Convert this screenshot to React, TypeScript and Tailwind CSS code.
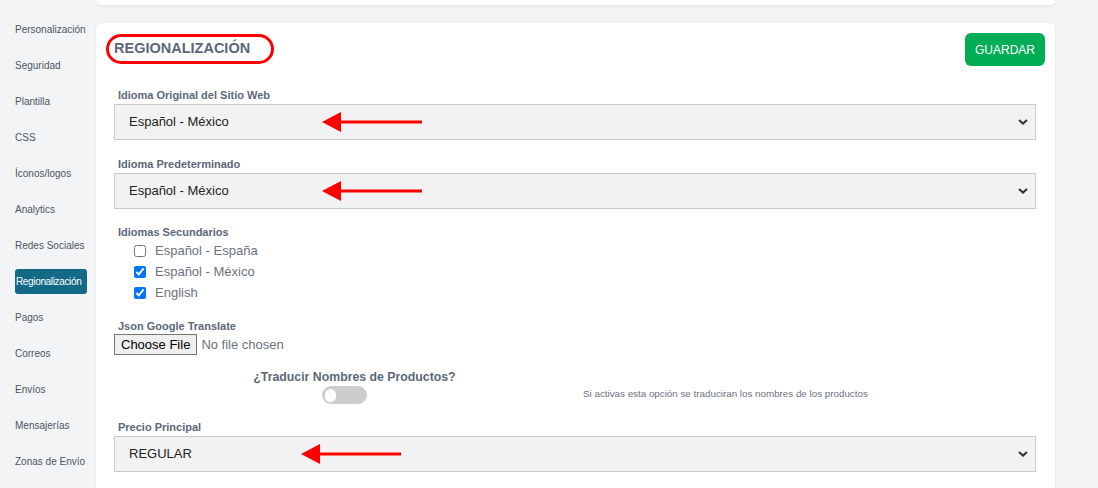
import { useState } from "react";

const MENU = [
  "Personalización",
  "Seguridad",
  "Plantilla",
  "CSS",
  "Íconos/logos",
  "Analytics",
  "Redes Sociales",
  "Regionalización",
  "Pagos",
  "Correos",
  "Envíos",
  "Mensajerías",
  "Zonas de Envío",
];

const IDIOMAS = [
  { label: "Español - España", checked: false },
  { label: "Español - México", checked: true },
  { label: "English", checked: true },
];

function Chevron() {
  return (
    <svg
      viewBox="0 0 10 6"
      className="pointer-events-none absolute right-[8px] top-1/2 h-[6px] w-[10px] -translate-y-1/2"
    >
      <path d="M1 1l4 3.6L9 1" fill="none" stroke="#333" strokeWidth="2" />
    </svg>
  );
}

function RedArrow({ length }: { length: number }) {
  return (
    <svg width={length} height="20" viewBox={`0 0 ${length} 20`} className="block">
      <polygon points="0,10 19,0 19,20" fill="#ff0000" />
      <rect x="18" y="8.5" width={length - 18} height="3" fill="#ff0000" />
    </svg>
  );
}

function Label({ children }: { children: string }) {
  return (
    <div className="pl-[4px] text-[11px] font-bold leading-[14px] text-[#5b6878]">
      {children}
    </div>
  );
}

function SelectField({
  label,
  value,
  arrowX,
}: {
  label: string;
  value: string;
  arrowX: number;
}) {
  return (
    <div className="flex flex-col gap-[2px]">
      <Label>{label}</Label>
      <div className="relative">
        <select
          defaultValue={value}
          className="block h-[36px] w-full appearance-none border border-[#c9c9c9] bg-[#f2f2f2] pl-[14px] text-[13px] text-[#222] outline-none"
        >
          <option>{value}</option>
        </select>
        <Chevron />
        <div
          className="pointer-events-none absolute top-1/2 -translate-y-1/2"
          style={{ left: arrowX }}
        >
          <RedArrow length={100} />
        </div>
      </div>
    </div>
  );
}

export default function App() {
  const [traducir, setTraducir] = useState(false);

  return (
    <div className="flex h-[488px] w-[1098px] overflow-hidden bg-[#f3f4f6] font-['Liberation_Sans',Arial,sans-serif]">
      <nav className="flex w-[96px] shrink-0 flex-col gap-[11px] pt-[17px] pl-[15px]">
        {MENU.map((item) => {
          const active = item === "Regionalización";
          return (
            <div
              key={item}
              className={
                active
                  ? "flex h-[25px] w-[72px] items-center rounded-[3px] bg-[#136a86] pl-[1px] text-[10px] tracking-[-0.35px] whitespace-nowrap text-white"
                  : "flex h-[25px] items-center text-[10px] whitespace-nowrap text-[#4b5563]"
              }
            >
              {item}
            </div>
          );
        })}
      </nav>

      <main className="flex w-[959px] flex-col gap-[18px]">
        <div className="h-[5px] rounded-b-[6px] bg-white shadow-[0_1px_3px_rgba(0,0,0,0.08)]" />

        <section className="flex flex-1 flex-col rounded-t-[6px] bg-white pt-[10px] pr-[19px] pl-[18px] shadow-[0_1px_3px_rgba(0,0,0,0.08)]">
          <div className="flex items-start justify-between">
            <div className="relative mt-[1px] ml-[-8px] flex h-[30px] w-[168px] items-center rounded-[15px] border-[3px] border-[#ff0000] pl-[5px]">
              <h2 className="text-[14.5px] font-bold text-[#5b6878]">
                REGIONALIZACIÓN
              </h2>
            </div>
            <button
              type="button"
              className="mr-[-9px] h-[33px] w-[80px] rounded-[6px] bg-[#00ad55] text-[12px] text-white"
            >
              GUARDAR
            </button>
          </div>

          <div className="mt-[22px] flex flex-col gap-[17px]">
            <SelectField
              label="Idioma Original del Sitio Web"
              value="Español - México"
              arrowX={208}
            />
            <SelectField
              label="Idioma Predeterminado"
              value="Español - México"
              arrowX={208}
            />
          </div>

          <div className="mt-[16px] flex flex-col">
            <Label>Idiomas Secundarios</Label>
            <div className="mt-[4px] flex flex-col gap-[5px] pl-[20px]">
              {IDIOMAS.map((idioma) => (
                <label
                  key={idioma.label}
                  className="flex h-[16px] items-center gap-[9px] text-[13px] text-[#6b7280]"
                >
                  <input
                    type="checkbox"
                    defaultChecked={idioma.checked}
                    className="m-0 h-[12px] w-[12px]"
                  />
                  {idioma.label}
                </label>
              ))}
            </div>
          </div>

          <div className="mt-[18px] flex flex-col gap-[1px]">
            <Label>Json Google Translate</Label>
            <input
              type="file"
              className="block text-[13px] text-[#6b7280] file:mr-[4px] file:h-[21px] file:border file:border-[#767676] file:bg-[#efefef] file:px-[6px] file:text-[13px] file:text-black"
            />
          </div>

          <div className="mt-[15px] grid grid-cols-[461px_1fr]">
            <div className="flex flex-col items-center">
              <div className="pl-[20px] text-[12.3px] leading-[15px] font-bold text-[#5b6878]">
                ¿Traducir Nombres de Productos?
              </div>
              <button
                type="button"
                onClick={() => setTraducir(!traducir)}
                className={
                  traducir
                    ? "mt-[1px] flex h-[18px] w-[45px] items-center justify-end rounded-full bg-[#136a86] px-[3px]"
                    : "mt-[1px] flex h-[18px] w-[45px] items-center rounded-full bg-[#cccccc] px-[3px]"
                }
              >
                <span className="h-[13px] w-[11px] rounded-full bg-white" />
              </button>
            </div>
            <div className="flex items-end pb-[2px] pl-[8px] text-[9.8px] text-[#6b7280]">
              Si activas esta opción se traduciran los nombres de los productos
            </div>
          </div>

          <div className="mt-[16px]">
            <SelectField label="Precio Principal" value="REGULAR" arrowX={187} />
          </div>
        </section>
      </main>
    </div>
  );
}
